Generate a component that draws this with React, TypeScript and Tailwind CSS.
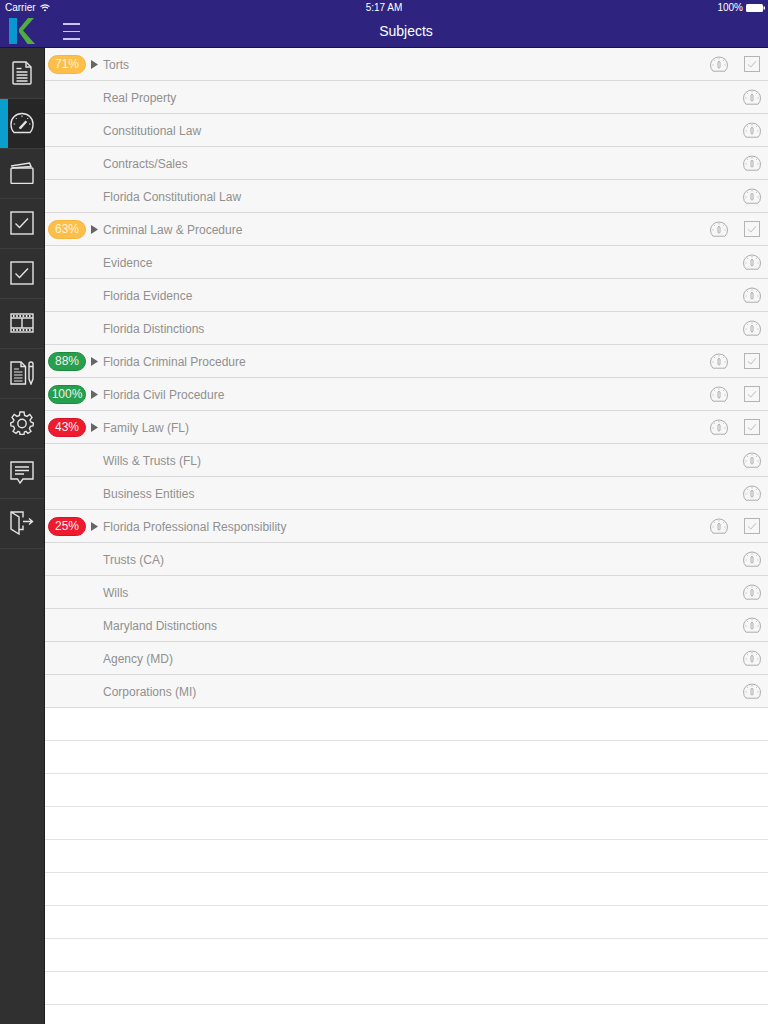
import React from "react";

const font = { fontFamily: '"Liberation Sans", Arial, sans-serif' };

type Row = { t: string; p?: number };
const rows: Row[] = [
  { t: "Torts", p: 71 },
  { t: "Real Property" },
  { t: "Constitutional Law" },
  { t: "Contracts/Sales" },
  { t: "Florida Constitutional Law" },
  { t: "Criminal Law & Procedure", p: 63 },
  { t: "Evidence" },
  { t: "Florida Evidence" },
  { t: "Florida Distinctions" },
  { t: "Florida Criminal Procedure", p: 88 },
  { t: "Florida Civil Procedure", p: 100 },
  { t: "Family Law (FL)", p: 43 },
  { t: "Wills & Trusts (FL)" },
  { t: "Business Entities" },
  { t: "Florida Professional Responsibility", p: 25 },
  { t: "Trusts (CA)" },
  { t: "Wills" },
  { t: "Maryland Distinctions" },
  { t: "Agency (MD)" },
  { t: "Corporations (MI)" },
];

function Gauge() {
  return (
    <svg width="18" height="16" viewBox="0 0 18 16" fill="none" stroke="#adadad" strokeWidth="1">
      <path d="M3 15.2 H15 Q17.5 13 17.5 9 A8.5 8 0 0 0 .5 9 Q.5 13 3 15.2 Z" />
      <path d="M8 11.5 V6 Q9 4.6 10 6 V11.5 Q9 12.7 8 11.5 Z" />
      <path d="M9 2.2v1.2M4 4l.8.8M14 4l-.8.8M2.4 9h1.2M14.4 9h1.2" strokeWidth="0.8" />
    </svg>
  );
}

function Check() {
  return (
    <svg width="16" height="16" viewBox="0 0 16 16" fill="none">
      <rect x=".5" y=".5" width="15" height="15" stroke="#b4b4b4" />
      <path d="M4 8.5 L6.8 11 L12 5.2" stroke="#b4b4b4" strokeWidth="0.9" />
    </svg>
  );
}

function badgeColor(p: number) {
  if (p >= 80) return "bg-[#27a04d] border-[#1c8a3e] text-[#f0f0f0]";
  if (p >= 50) return "bg-[#fdbf4a] border-[#f5b53f] text-[#fdf3d8]";
  return "bg-[#ef1a2d] border-[#d4122a] text-[#f4f4f4]";
}

const s = { fill: "none", stroke: "#e4e4e4", strokeWidth: 1.4 };
const icons: React.ReactNode[] = [
  <svg width="24" height="24" viewBox="0 0 24 24" {...s}>
    <path d="M3 2 Q3 1 4 1 H16 L21 6 V22 Q21 23 20 23 H4 Q3 23 3 22 Z" />
    <path d="M16 1 V6 H21" />
    <path d="M6.5 7.5h5" />
    <path d="M6.5 11h11M6.5 14h11M6.5 17h11M6.5 20h11" strokeWidth="1.6" />
  </svg>,
  <svg width="24" height="22" viewBox="0 0 24 22" {...s}>
    <path d="M4 20.5 H20 Q23 17.5 23 12 A11 10.5 0 0 0 1 12 Q1 17.5 4 20.5 Z" />
    <path d="M9 15.5 L15.5 8.5 L17.2 10 L11 17 Q9.2 17.4 9 15.5 Z" fill="#e4e4e4" stroke="none" />
    <path d="M12 3.5v1.6M5.8 6l1 1M18.2 6l-1 1M3.6 12h1.6M19 12h1.4" strokeWidth="1" />
  </svg>,
  <svg width="24" height="22" viewBox="0 0 24 22" {...s}>
    <rect x="1" y="6" width="22" height="15.5" rx="1" />
    <path d="M1 4 L19.5 1 L21 4.5 L2 6" />
  </svg>,
  <svg width="24" height="24" viewBox="0 0 24 24" {...s}>
    <rect x="1" y="1" width="22" height="22" />
    <path d="M5.5 12.5 L9.5 16.5 L18 7.5" />
  </svg>,
  <svg width="24" height="24" viewBox="0 0 24 24" {...s}>
    <rect x="1" y="1" width="22" height="22" />
    <path d="M5.5 12.5 L9.5 16.5 L18 7.5" />
  </svg>,
  <svg width="24" height="20" viewBox="0 0 24 20" {...s}>
    <rect x="1" y="1" width="22" height="18" />
    <path d="M1 5 H23 M1 15 H23 M12 5 V15" />
    <path d="M3 3h18M3 17h18" strokeWidth="2" strokeDasharray="1.6 1.6" />
  </svg>,
  <svg width="24" height="24" viewBox="0 0 24 24" {...s}>
    <path d="M1 1 H11 L15.5 5.5 V23 H1 Z" />
    <path d="M11 1 V5.5 H15.5" />
    <path d="M4 8h5M4 11h8.5M4 14h8.5M4 17h8.5M4 20h8.5" strokeWidth="1.1" />
    <path d="M19 3 Q19 1 21 1 Q23 1 23 3 V18 L21 23 L19 18 Z M19 5.5 H23" />
  </svg>,
  <svg width="24" height="24" viewBox="0 0 24 24" {...s}>
    <path d="M10 1 H14 L14.6 4.4 L17 5.4 L19.8 3.4 L22 6.4 L20 9 L21 11 L23.4 12 L23 15 L20.4 15.4 L19.4 17.8 L21 20.4 L18 22.4 L16 20.4 L14.4 21 L14 23.4 H10 L9.6 21 L8 20.4 L6 22.4 L3 20.4 L4.6 17.8 L3.6 15.4 L1 15 L.6 12 L3 11 L4 9 L2 6.4 L4.2 3.4 L7 5.4 L9.4 4.4 Z" />
    <circle cx="12" cy="12.5" r="4.2" />
  </svg>,
  <svg width="24" height="24" viewBox="0 0 24 24" {...s}>
    <path d="M1 1 H23 V18 H13 L10 22 L7.5 18 H1 Z" />
    <path d="M5 6h14M5 9.5h14M5 13h9" />
  </svg>,
  <svg width="24" height="24" viewBox="0 0 24 24" {...s}>
    <path d="M13 6.5 V1 H1 V18 L9 23 V6 L1 1 M9 18.5 H13 V14.5" />
    <path d="M13 10.5 H22 M19 7.5 L22.5 10.5 L19 13.5" />
  </svg>,
];

function Tab({ active, children }: { active?: boolean; children: React.ReactNode }) {
  return (
    <div className={`h-[50px] pb-px flex items-center justify-center relative border-t border-[#3d3d3d] first:border-t-0 ${active ? "bg-[#262626]" : ""}`}>
      {active && <div className="absolute left-0 top-0 bottom-0 w-2 bg-[#0a9ecf]" />}
      <div className="flex items-center justify-center w-6">{children}</div>
    </div>
  );
}

export default function App() {
  return (
    <div className="w-[768px] h-[1024px] overflow-hidden flex flex-col bg-white" style={font}>
      <header className="h-12 shrink-0 bg-[#2e2480] border-b border-[#17123f] flex relative">
        <div className="w-[44px] shrink-0 relative flex justify-center pt-[17px]">
          <svg width="26" height="27" viewBox="0 0 26 27">
            <rect x="0" y="1" width="8" height="26" fill="#0a97d0" />
            <path d="M19 1 H25 L14 13.5 L26 27 H18.5 L10 15 V12 Z" fill="#4fae3f" />
          </svg>
        </div>
        <div className="absolute left-[5px] top-[1px] text-[10px] text-white flex items-center gap-[4px] leading-[14px]">
          Carrier
          <svg width="10" height="8" viewBox="0 0 10 8" fill="none" stroke="white" strokeWidth="1.2">
            <path d="M.5 2.6 Q5 -.9 9.5 2.6" />
            <path d="M2.1 4.3 Q5 2 7.9 4.3" />
            <path d="M5 7.6 L3.6 6 Q5 4.9 6.4 6 Z" fill="white" stroke="none" />
          </svg>
        </div>
        <div className="absolute left-0 right-0 top-[1px] text-center text-[10px] text-white leading-[14px]">5:17 AM</div>
        <div className="absolute right-[3px] top-[1px] text-[10px] text-white flex items-center gap-[3px] leading-[14px]">
          100%
          <svg width="19" height="8" viewBox="0 0 19 8" fill="white">
            <rect x="0" y="0" width="17" height="8" rx="1.5" />
            <rect x="17.5" y="2.5" width="1.5" height="3" />
          </svg>
        </div>
        <div className="absolute left-[63px] top-[23px] w-[17px] flex flex-col gap-[6px]">
          <div className="h-[1.5px] bg-[#c9c6f0]" />
          <div className="h-[1.5px] bg-[#c9c6f0]" />
          <div className="h-[1.5px] bg-[#c9c6f0]" />
        </div>
        <div className="absolute left-[44px] right-0 top-[22px] text-center text-white text-sm leading-[18px]">Subjects</div>
      </header>
      <div className="flex flex-1 min-h-0">
        <aside className="w-[45px] shrink-0 bg-[#303030] border-r border-[#1c1c1c]">
          {icons.map((ic, i) => (
            <Tab key={i} active={i === 1}>{ic}</Tab>
          ))}
          <div className="border-t border-[#3d3d3d]" />
        </aside>
        <main className="flex-1 min-w-0">
          {rows.map((r) => (
            <div key={r.t} className="h-[33px] flex items-center bg-[#f7f7f7] border-b border-[#d9d9d9]">
              <div className="w-[58px] shrink-0 flex items-center pl-[3px]">
                {r.p !== undefined && (
                  <>
                    <div className={`w-[38px] h-[19px] rounded-full border ${badgeColor(r.p)} text-xs text-center leading-[17px] shrink-0`}>
                      {r.p}%
                    </div>
                    <svg className="ml-[5px] shrink-0" width="7" height="9" viewBox="0 0 7 9" fill="#666666">
                      <path d="M0 0 L7 4.5 L0 9 Z" />
                    </svg>
                  </>
                )}
              </div>
              <div className="flex-1 pt-px text-[#909090] text-xs">{r.t}</div>
              {r.p !== undefined ? (
                <div className="flex items-center mr-[8px]">
                  <Gauge />
                  <div className="ml-[16px]"><Check /></div>
                </div>
              ) : (
                <div className="mr-[7px] flex items-center"><Gauge /></div>
              )}
            </div>
          ))}
          {Array.from({ length: 10 }).map((_, i) => (
            <div key={i} className="h-[33px] border-b border-[#e3e3e3] bg-white" />
          ))}
        </main>
      </div>
    </div>
  );
}
